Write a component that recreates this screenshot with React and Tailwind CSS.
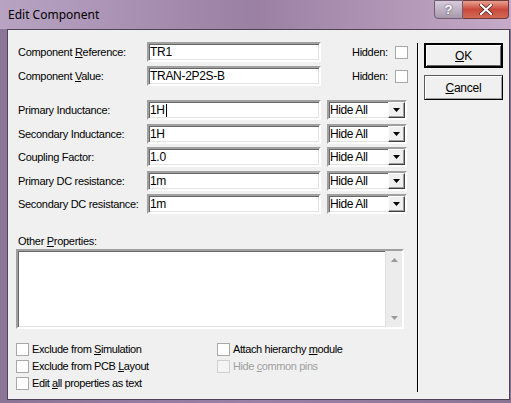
import React from "react";

const sunken =
  "border-2 border-t-[#a0a0a0] border-l-[#a0a0a0] border-r-white border-b-white shadow-[inset_1px_1px_0_#696969,inset_-1px_-1px_0_#e3e3e3] bg-white";

const Mn = ({ children }) => <span className="underline underline-offset-[1px]">{children}</span>;

const TextBox = ({ value, caret }) => (
  <div className={`w-[174px] h-[20px] ${sunken} flex items-center pl-[1px] text-[12px] tracking-[-0.3px] text-black`}>
    <span>{value}</span>
    {caret && <span className="w-[1px] h-[13px] bg-black ml-[1px]" />}
  </div>
);

const Dropdown = () => (
  <div className={`w-[80px] h-[20px] ml-[6px] ${sunken} flex items-center`}>
    <span className="flex-1 pl-[1px] text-[12px] tracking-[-0.4px]">Hide All</span>
    <div className="w-[17px] h-[16px] bg-[#f0f0f0] border border-t-white border-l-white border-r-[#404040] border-b-[#404040] shadow-[inset_-1px_-1px_0_#a0a0a0] flex items-center justify-center">
      <svg width="7" height="4" viewBox="0 0 7 4">
        <path d="M0 0h7L3.5 4z" fill="#000" />
      </svg>
    </div>
  </div>
);

const CheckBox = ({ disabled }) => (
  <div
    className={`w-[13px] h-[13px] border ${
      disabled ? "border-[#cfcfcf] bg-[#f4f4f4]" : "border-[#a8a8a8] bg-white"
    }`}
  />
);

const Check = ({ children, disabled }) => (
  <div className="flex items-center h-[17px]">
    <CheckBox disabled={disabled} />
    <span className={`ml-[3px] text-[11px] tracking-[-0.4px] ${disabled ? "text-[#a0a0a0]" : "text-black"}`}>{children}</span>
  </div>
);

const Label = ({ children }) => (
  <div className="w-[131px] pl-[2px] text-[11px] tracking-[-0.3px] text-black">{children}</div>
);

const topRows = [
  { label: <>Component <Mn>R</Mn>eference:</>, value: "TR1" },
  { label: <>Component <Mn>V</Mn>alue:</>, value: "TRAN-2P2S-B" },
];

const propRows = [
  { label: "Primary Inductance:", value: "1H", caret: true, mt: "mt-[14px]" },
  { label: "Secondary Inductance:", value: "1H", mt: "mt-[4px]" },
  { label: "Coupling Factor:", value: "1.0", mt: "mt-[3px]" },
  { label: "Primary DC resistance:", value: "1m", mt: "mt-[4px]" },
  { label: "Secondary DC resistance:", value: "1m", mt: "mt-[3px]" },
];

const Button = ({ children, primary }) => (
  <div
    className={`w-[79px] h-[25px] flex items-center justify-center text-[12px] tracking-[-0.2px] bg-[#f0f0f0] ${
      primary
        ? "border-2 border-black shadow-[inset_1px_1px_0_white,inset_-1px_-1px_0_#696969]"
        : "border border-t-[#5a5a5a] border-l-[#5a5a5a] border-r-black border-b-black shadow-[inset_1px_1px_0_white,inset_-1px_-1px_0_#a0a0a0]"
    }`}
  >
    {children}
  </div>
);

export default function App() {
  return (
    <div className="w-[511px] h-[403px] overflow-hidden bg-gradient-to-r from-[#8b7596] via-[#9a82a6] to-[#8a7494] font-['Liberation_Sans',Arial,sans-serif] flex flex-col">
      {/* Title bar */}
      <div className="h-[29px] flex items-start bg-gradient-to-r from-[#b8a3c3] via-[#9a80a3] to-[#c6aac8]">
        <div className="pl-[8px] pt-[7px] text-[12px] text-black font-['Noto_Sans',sans-serif] leading-[16px]">
          Edit Component
        </div>
        <div className="flex-1" />
        <div className="flex">
          <div className="w-[29px] h-[19px] rounded-bl-[4px] border border-[#6e5f74] bg-gradient-to-b from-[#d8ccdc] to-[#a898ad] flex items-center justify-center text-white text-[13px] font-bold leading-none [text-shadow:0_0_2px_#333]">
            ?
          </div>
          <div className="w-[46px] h-[19px] rounded-br-[4px] border border-l-0 border-[#6e3a3a] bg-gradient-to-b from-[#e8a090] via-[#c8483a] to-[#d36a56] flex items-center justify-center mr-[2px]">
            <svg width="14" height="11" viewBox="0 0 14 11">
              <path d="M2 1l10 9M12 1L2 10" stroke="#3a1a1a" strokeWidth="3.4" strokeLinecap="round" />
              <path d="M2 1l10 9M12 1L2 10" stroke="#fff" strokeWidth="2.2" strokeLinecap="round" />
            </svg>
          </div>
        </div>
      </div>

      {/* Client area */}
      <div className="ml-[7px] mr-[1px] h-[371px] border border-[#4e4256] bg-[#f0f0f0] flex">
        <div className="w-[409px] pl-[8px] pt-[12px] flex flex-col">
          {topRows.map((r, i) => (
            <div key={i} className={`flex items-center h-[20px] ${i ? "mt-[4px]" : ""}`}>
              <Label>{r.label}</Label>
              <TextBox value={r.value} />
              <span className="ml-[31px] text-[11px] tracking-[-0.3px]">Hidden:</span>
              <div className="ml-[7px]">
                <CheckBox />
              </div>
            </div>
          ))}
          {propRows.map((r, i) => (
            <div key={i} className={`flex items-center h-[20px] ${r.mt}`}>
              <Label>{r.label}</Label>
              <TextBox value={r.value} caret={r.caret} />
              <Dropdown />
            </div>
          ))}

          <div className="mt-[20px] h-[14px] pl-[2px] text-[11px] tracking-[-0.3px] leading-[14px]">
            Other <Mn>P</Mn>roperties:
          </div>
          <div className={`mt-[1px] w-[388px] h-[80px] ${sunken} flex justify-end`}>
            <div className="w-[17px] h-full bg-[#ececec] border-l border-[#e0e0e0] flex flex-col items-center justify-between py-[7px]">
              <svg width="7" height="4" viewBox="0 0 7 4">
                <path d="M3.5 0L7 4H0z" fill="#9a9a9a" />
              </svg>
              <svg width="7" height="4" viewBox="0 0 7 4">
                <path d="M0 0h7L3.5 4z" fill="#9a9a9a" />
              </svg>
            </div>
          </div>

          <div className="mt-[12px] flex">
            <div className="w-[201px] flex flex-col">
              <Check>Exclude from <Mn>S</Mn>imulation</Check>
              <Check>Exclude from PCB <Mn>L</Mn>ayout</Check>
              <Check>Edit <Mn>a</Mn>ll properties as text</Check>
            </div>
            <div className="flex flex-col">
              <Check>Attach hierarchy <Mn>m</Mn>odule</Check>
              <Check disabled>Hide <Mn>c</Mn>ommon pins</Check>
            </div>
          </div>
        </div>

        <div className="mt-[13px] w-[1px] h-[349px] bg-black" />
        <div className="w-[1px] mt-[13px] h-[349px] bg-[#fafafa]" />

        <div className="pl-[5px] pt-[13px] flex flex-col gap-[7px]">
          <Button primary>
            <Mn>O</Mn>K
          </Button>
          <Button>
            <Mn>C</Mn>ancel
          </Button>
        </div>
      </div>
    </div>
  );
}
